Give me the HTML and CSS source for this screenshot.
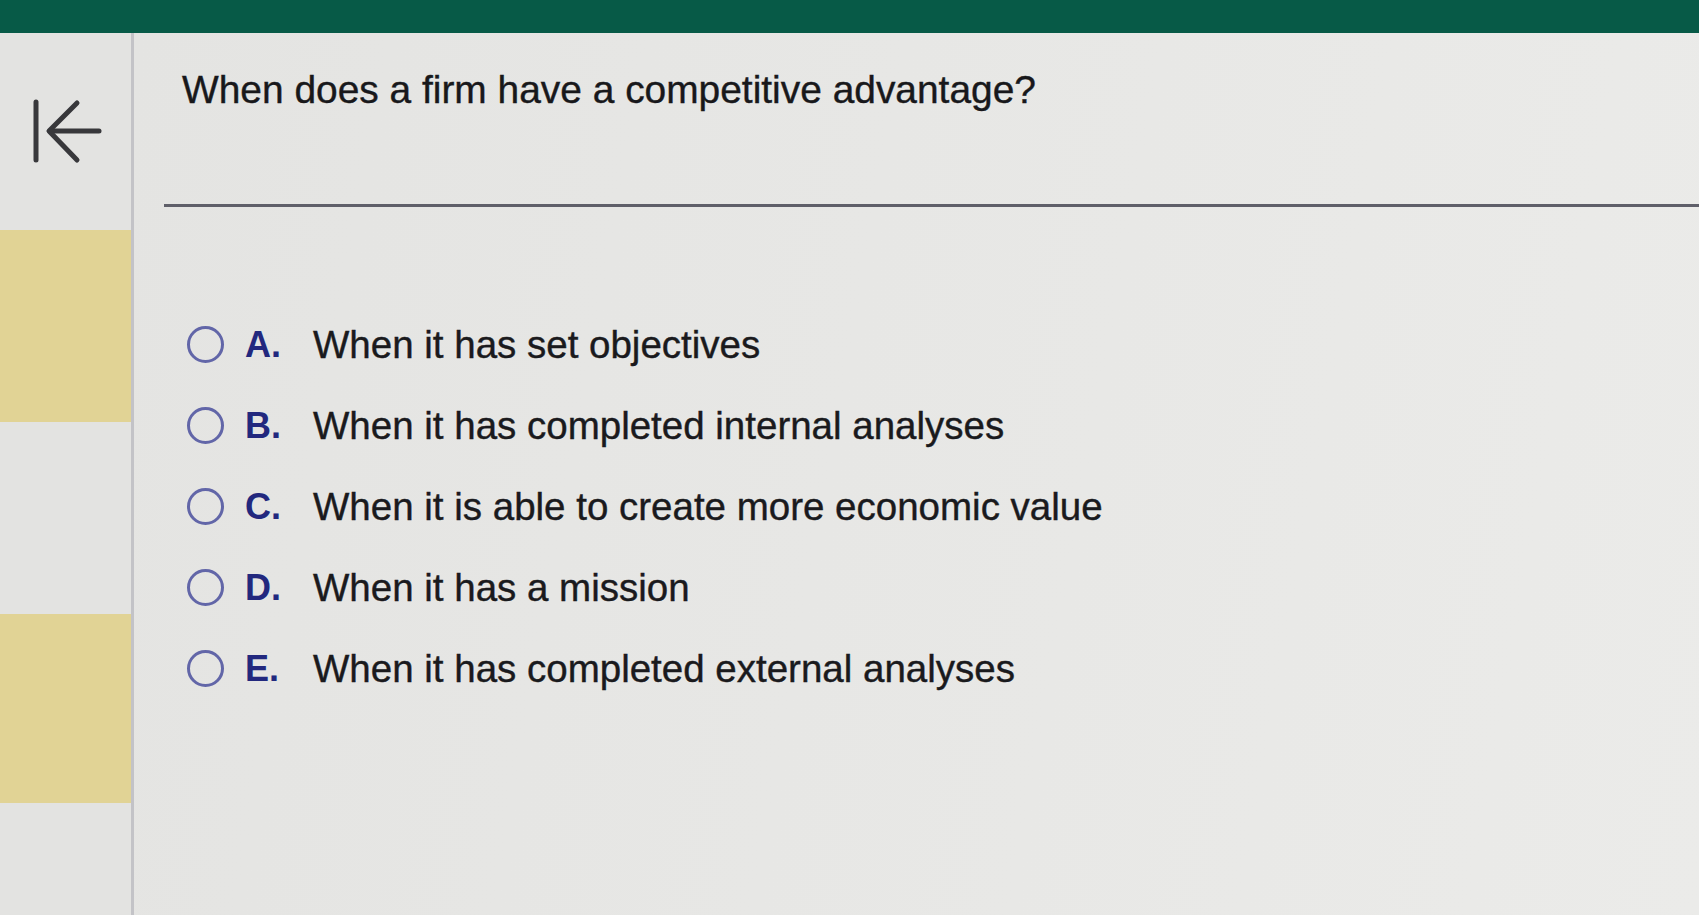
FILE: index.html
```html
<!DOCTYPE html>
<html lang="en">
<head>
<meta charset="utf-8">
<title>Question</title>
<link rel="stylesheet" href="styles.css">
</head>
<body>
<div class="topbar"></div>
<div class="layout">
  <aside class="sidebar">
    <div class="side-item side-first">
      <svg class="back-icon" width="75" height="66" viewBox="0 0 75 66" aria-label="Collapse">
        <line x1="5" y1="4" x2="5" y2="62" />
        <line x1="19" y1="33" x2="68" y2="33" />
        <polyline points="46,5 18,33 46,62" />
      </svg>
    </div>
    <div class="side-item side-yellow"></div>
    <div class="side-item"></div>
    <div class="side-item side-yellow"></div>
    <div class="side-item"></div>
  </aside>
  <main class="main">
    <h1 class="question">When does a firm have a competitive advantage?</h1>
    <hr class="rule">
    <ul class="options">
      <li class="option"><span class="radio"></span><span class="letter">A.</span><span class="text">When it has set objectives</span></li>
      <li class="option"><span class="radio"></span><span class="letter">B.</span><span class="text">When it has completed internal analyses</span></li>
      <li class="option"><span class="radio"></span><span class="letter">C.</span><span class="text">When it is able to create more economic value</span></li>
      <li class="option"><span class="radio"></span><span class="letter">D.</span><span class="text">When it has a mission</span></li>
      <li class="option"><span class="radio"></span><span class="letter">E.</span><span class="text">When it has completed external analyses</span></li>
    </ul>
  </main>
</div>
</body>
</html>
```

FILE: styles.css
```css
html, body {
  margin: 0;
  padding: 0;
}

body {
  width: 1699px;
  height: 915px;
  overflow: hidden;
  background: #e6e6e3;
  font-family: "Liberation Sans", Arial, sans-serif;
  color: #1f1f21;
}

.topbar {
  height: 33px;
  background: #075a47;
}

.layout {
  display: flex;
  height: 882px;
}

.sidebar {
  width: 131px;
  flex: none;
  border-right: 3px solid #c3c3c7;
  background: #e3e3e1;
  display: grid;
  grid-template-rows: 197px 192px 192px 189px 1fr;
}

.side-item {
  box-sizing: border-box;
}

.side-first {
  padding: 65px 0 0 31px;
}

.side-yellow {
  background: #e1d395;
}

.back-icon {
  display: block;
  fill: none;
  stroke: #38383b;
  stroke-width: 5;
  stroke-linecap: round;
  stroke-linejoin: round;
}

.main {
  flex: 1;
  padding: 35px 0 0 30px;
  background: linear-gradient(100deg, #e4e4e2 0%, #e8e8e6 60%, #ebebe9 100%);
}

.question {
  margin: 0 0 0 18px;
  font-size: 38.9px;
  line-height: 44px;
  font-weight: normal;
  color: #18181b;
  -webkit-text-stroke: 0.4px #18181b;
}

.rule {
  margin: 92px 0 0 0;
  border: 0;
  height: 3px;
  background: #5f5f69;
}

.options {
  list-style: none;
  margin: 97px 0 0 0;
  padding: 0;
}

.option {
  display: flex;
  align-items: center;
  height: 81px;
}

.radio {
  box-sizing: border-box;
  width: 37px;
  height: 37px;
  margin-left: 23px;
  border: 3.5px solid #6266a8;
  border-radius: 50%;
  flex: none;
}

.letter {
  width: 68px;
  margin-left: 21px;
  font-size: 36px;
  font-weight: bold;
  color: #22287e;
  flex: none;
}

.text {
  font-size: 38.5px;
  color: #1a1a1d;
  -webkit-text-stroke: 0.4px #1a1a1d;
  white-space: nowrap;
}
```
